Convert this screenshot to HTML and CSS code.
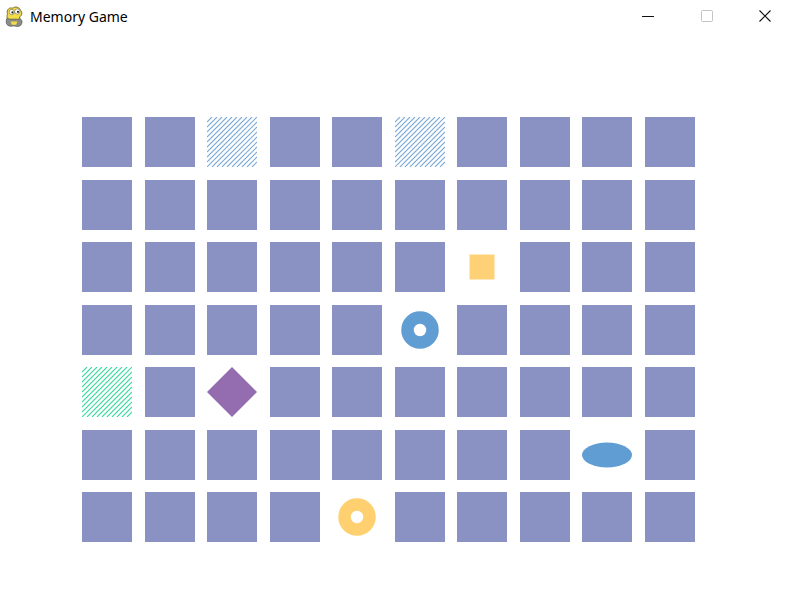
FILE: index.html
```html
<!DOCTYPE html>
<html>
<head>
<meta charset="utf-8">
<title>Memory Game</title>
<link rel="stylesheet" href="styles.css">
</head>
<body>
<div class="window">
  <div class="titlebar">
    <svg class="app-icon" viewBox="0 0 18 20" width="20" height="22">
      <path d="M3 7 C2 3 5 1 8 2 C10 0 14 1 15 4 C17 6 16 9 14 10 C15 12 14 14 12 14 L6 14 C3 14 2 11 3 7 Z" fill="#f4dc48" stroke="#6a6220" stroke-width="0.8"/>
      <circle cx="7" cy="5.5" r="2.4" fill="#fff" stroke="#555" stroke-width="0.5"/>
      <circle cx="12" cy="5" r="2.4" fill="#fff" stroke="#555" stroke-width="0.5"/>
      <circle cx="7.6" cy="5.8" r="1" fill="#222"/>
      <circle cx="12.6" cy="5.3" r="1" fill="#222"/>
      <path d="M2 13 C2 11 4 11 5 12 L13 12 C15 11 17 13 16 16 C15 19 12 19 9 18 C6 19 2 18 2 15 Z" fill="#8c8c86" stroke="#444" stroke-width="0.6"/>
      <path d="M6 14 L12 14 L11 17 L7 17 Z" fill="#f4dc48"/>
    </svg>
    <span class="title">Memory Game</span>
    <div class="controls">
      <svg class="ctl" viewBox="0 0 12 12" width="12" height="12"><path d="M0 6.5H12" stroke="#111" stroke-width="1"/></svg>
      <svg class="ctl" viewBox="0 0 12 12" width="12" height="12"><rect x="0.5" y="0.5" width="11" height="11" rx="1" fill="none" stroke="#c4c4c4" stroke-width="1"/></svg>
      <svg class="ctl" viewBox="0 0 12 12" width="12" height="12"><path d="M0.5 0.5L11.5 11.5M11.5 0.5L0.5 11.5" stroke="#111" stroke-width="1.1"/></svg>
    </div>
  </div>
  <div class="board">
    <!-- row 0 -->
    <div class="box"></div><div class="box"></div>
    <div class="cell"><svg viewBox="0 0 50 50"><path class="lines blue-s" d="M0 5L5 0M0 10L10 0M0 15L15 0M0 20L20 0M0 25L25 0M0 30L30 0M0 35L35 0M0 40L40 0M0 45L45 0M0 50L50 0M5 50L50 5M10 50L50 10M15 50L50 15M20 50L50 20M25 50L50 25M30 50L50 30M35 50L50 35M40 50L50 40M45 50L50 45"/></svg></div>
    <div class="box"></div><div class="box"></div>
    <div class="cell"><svg viewBox="0 0 50 50"><path class="lines blue-s" d="M0 5L5 0M0 10L10 0M0 15L15 0M0 20L20 0M0 25L25 0M0 30L30 0M0 35L35 0M0 40L40 0M0 45L45 0M0 50L50 0M5 50L50 5M10 50L50 10M15 50L50 15M20 50L50 20M25 50L50 25M30 50L50 30M35 50L50 35M40 50L50 40M45 50L50 45"/></svg></div>
    <div class="box"></div><div class="box"></div><div class="box"></div><div class="box"></div>
    <!-- row 1 -->
    <div class="box"></div><div class="box"></div><div class="box"></div><div class="box"></div><div class="box"></div>
    <div class="box"></div><div class="box"></div><div class="box"></div><div class="box"></div><div class="box"></div>
    <!-- row 2 -->
    <div class="box"></div><div class="box"></div><div class="box"></div><div class="box"></div><div class="box"></div><div class="box"></div>
    <div class="cell"><svg viewBox="0 0 50 50"><rect class="yellow" x="12.5" y="12.5" width="25" height="25"/></svg></div>
    <div class="box"></div><div class="box"></div><div class="box"></div>
    <!-- row 3 -->
    <div class="box"></div><div class="box"></div><div class="box"></div><div class="box"></div><div class="box"></div>
    <div class="cell"><svg viewBox="0 0 50 50"><circle class="donut blue-d" cx="25" cy="25" r="12.5"/></svg></div>
    <div class="box"></div><div class="box"></div><div class="box"></div><div class="box"></div>
    <!-- row 4 -->
    <div class="cell"><svg viewBox="0 0 50 50"><path class="lines teal-s" d="M0 5L5 0M0 10L10 0M0 15L15 0M0 20L20 0M0 25L25 0M0 30L30 0M0 35L35 0M0 40L40 0M0 45L45 0M0 50L50 0M5 50L50 5M10 50L50 10M15 50L50 15M20 50L50 20M25 50L50 25M30 50L50 30M35 50L50 35M40 50L50 40M45 50L50 45"/></svg></div>
    <div class="box"></div>
    <div class="cell"><svg viewBox="0 0 50 50"><polygon class="purple" points="25,0 50,25 25,50 0,25"/></svg></div>
    <div class="box"></div><div class="box"></div><div class="box"></div><div class="box"></div><div class="box"></div><div class="box"></div><div class="box"></div>
    <!-- row 5 -->
    <div class="box"></div><div class="box"></div><div class="box"></div><div class="box"></div><div class="box"></div><div class="box"></div><div class="box"></div><div class="box"></div>
    <div class="cell"><svg viewBox="0 0 50 50"><ellipse class="blue" cx="25" cy="25" rx="25" ry="12.5"/></svg></div>
    <div class="box"></div>
    <!-- row 6 -->
    <div class="box"></div><div class="box"></div><div class="box"></div><div class="box"></div>
    <div class="cell"><svg viewBox="0 0 50 50"><circle class="donut yellow-s" cx="25" cy="25" r="12.5"/></svg></div>
    <div class="box"></div><div class="box"></div><div class="box"></div><div class="box"></div><div class="box"></div>
  </div>
</div>
</body>
</html>
```
FILE: styles.css
```css
html, body {
  margin: 0;
  padding: 0;
  background: #ffffff;
}
.window {
  width: 792px;
  height: 615px;
  background: #ffffff;
  overflow: hidden;
}
.titlebar {
  height: 32px;
  display: flex;
  align-items: center;
  padding-left: 4px;
  font-family: "Noto Sans", "Open Sans", sans-serif;
}
.app-icon {
  flex: none;
  margin-top: 1px;
}
.title {
  margin-left: 6px;
  font-size: 14px;
  color: #000;
  flex: 1;
  margin-top: 1px;
}
.controls {
  display: flex;
  align-items: center;
  gap: 46.5px;
  padding-right: 21px;
}
.ctl {
  display: block;
}
.board {
  display: grid;
  grid-template-columns: repeat(10, 50px);
  grid-auto-rows: 50px;
  gap: 12.5px;
  margin-top: 85px;
  margin-left: 82px;
}
.box {
  background: #8a91c3;
}
.cell svg {
  display: block;
  width: 50px;
  height: 50px;
}
.lines {
  fill: none;
  stroke-width: 1.1;
}
.blue-s { stroke: #7eaad6; }
.blue-d { stroke: #609dd3; }
.teal-s { stroke: #3fd8a2; }
.yellow-s { stroke: #ffd070; }
.donut {
  fill: none;
  stroke-width: 12.5;
}
.yellow { fill: #ffd176; }
.blue { fill: #609dd3; }
.purple { fill: #936daf; }
```
